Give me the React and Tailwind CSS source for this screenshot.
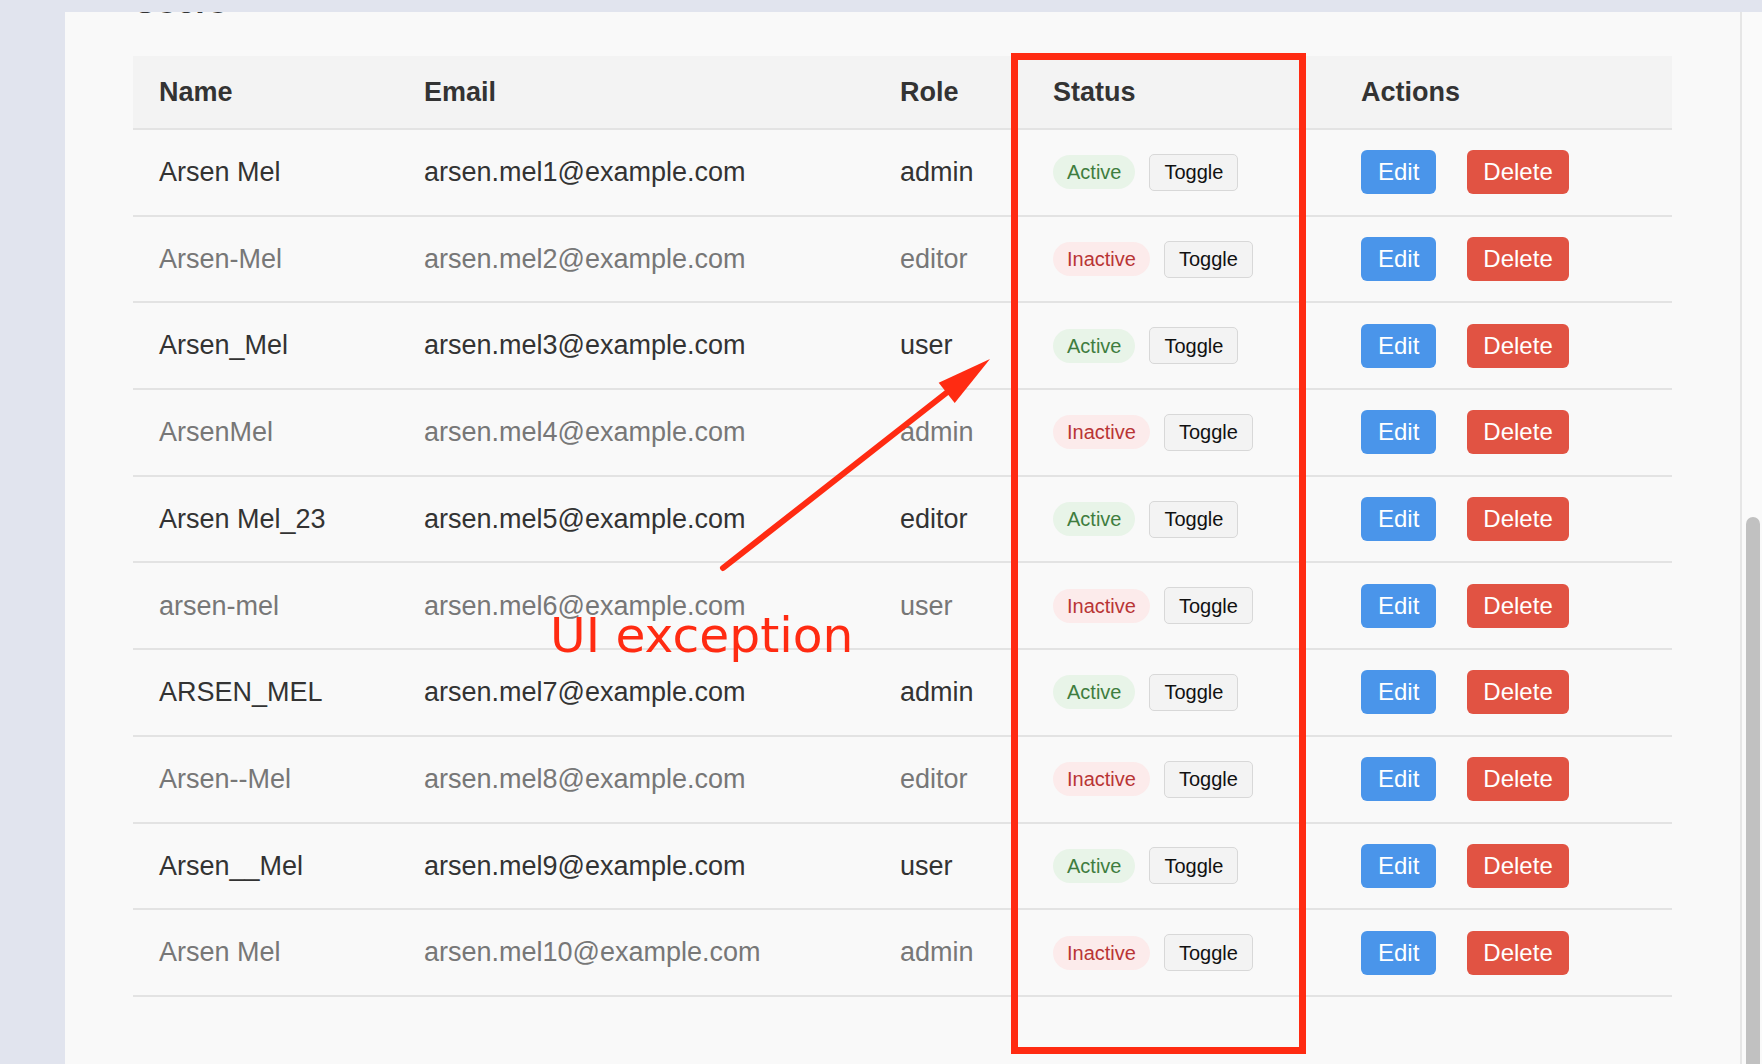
import React from 'react'

const users = [
  { name: 'Arsen Mel', email: 'arsen.mel1@example.com', role: 'admin', active: true },
  { name: 'Arsen-Mel', email: 'arsen.mel2@example.com', role: 'editor', active: false },
  { name: 'Arsen_Mel', email: 'arsen.mel3@example.com', role: 'user', active: true },
  { name: 'ArsenMel', email: 'arsen.mel4@example.com', role: 'admin', active: false },
  { name: 'Arsen Mel_23', email: 'arsen.mel5@example.com', role: 'editor', active: true },
  { name: 'arsen-mel', email: 'arsen.mel6@example.com', role: 'user', active: false },
  { name: 'ARSEN_MEL', email: 'arsen.mel7@example.com', role: 'admin', active: true },
  { name: 'Arsen--Mel', email: 'arsen.mel8@example.com', role: 'editor', active: false },
  { name: 'Arsen__Mel', email: 'arsen.mel9@example.com', role: 'user', active: true },
  { name: 'Arsen Mel', email: 'arsen.mel10@example.com', role: 'admin', active: false },
]

const cols = 'grid grid-cols-[265px_476px_153px_308px_336px]'

const StatusBadge = ({ active }) =>
  active ? (
    <span className="inline-flex h-[34px] items-center rounded-full bg-[#e8f4e8] px-[14px] text-[20px] text-[#3f7d3f]">
      Active
    </span>
  ) : (
    <span className="inline-flex h-[34px] items-center rounded-full bg-[#fcebeb] px-[14px] text-[20px] text-[#b93535]">
      Inactive
    </span>
  )

const UserRow = ({ user }) => {
  const tone = user.active ? 'text-[#333333]' : 'text-[#777777]'

  return (
    <div className={`${cols} h-[86.7px] border-b-2 border-[#e3e3e3] text-[27px] ${tone}`}>
      <div className="flex items-center px-[26px] whitespace-nowrap">{user.name}</div>
      <div className="flex items-center px-[26px] whitespace-nowrap">{user.email}</div>
      <div className="flex items-center px-[26px] whitespace-nowrap">{user.role}</div>
      <div className="flex items-center gap-[14px] px-[26px]">
        <StatusBadge active={user.active} />
        <button
          type="button"
          className="h-[37px] rounded-[5px] border border-[#d8d8d8] bg-[#f3f3f3] px-[14px] text-[20px] text-[#111111]"
        >
          Toggle
        </button>
      </div>
      <div className="flex items-center gap-[31px] px-[26px]">
        <button type="button" className="h-[44px] rounded-[6px] bg-[#4a95ea] px-[17px] text-[24px] text-white">
          Edit
        </button>
        <button type="button" className="h-[44px] rounded-[6px] bg-[#e15343] px-[16px] text-[24px] text-white">
          Delete
        </button>
      </div>
    </div>
  )
}

const App = () => {
  return (
    <div className="relative h-[1064px] w-full overflow-hidden bg-[#e1e4ee] font-['Liberation_Sans',Arial,sans-serif]">
      <div className="flex h-full flex-col pt-[12px]">
        <div className="flex min-h-0 flex-1">
          <div className="w-[65px] shrink-0" />

          <main className="min-w-0 flex-1 overflow-hidden bg-[#f9f9f9] px-[68px]">
            <div className="-mt-[28px]">
              <h2 className="text-[34px] font-bold leading-[34px] text-[#333333]">Users</h2>

              <div className="mt-[38px]">
                <div className={`${cols} h-[74px] border-b-2 border-[#e3e3e3] bg-[#f3f3f3] text-[27px] font-bold text-[#333333]`}>
                  <div className="flex items-center px-[26px]">Name</div>
                  <div className="flex items-center px-[26px]">Email</div>
                  <div className="flex items-center px-[26px]">Role</div>
                  <div className="flex items-center px-[26px]">Status</div>
                  <div className="flex items-center px-[26px]">Actions</div>
                </div>

                {users.map((user, index) => (
                  <UserRow key={index} user={user} />
                ))}
              </div>
            </div>
          </main>

          {/* scrollbar track */}
          <div className="flex w-[22px] shrink-0 flex-col border-l-2 border-[#e6e6e6] bg-[#fafafa] pt-[505px] pl-[4px] pr-[2px]">
            <div className="flex-1 rounded-t-full bg-[#c1c1c1]" />
          </div>
        </div>
      </div>

      {/* annotation overlay */}
      <div className="absolute left-[1011px] top-[53px] h-[1001px] w-[295px] border-[7px] border-[#ff2b12]" />

      <svg className="absolute left-0 top-0" width="1762" height="1064" viewBox="0 0 1762 1064">
        <line x1="723" y1="568" x2="950" y2="390" stroke="#ff2b12" strokeWidth="6" strokeLinecap="round" />
        <polygon points="990,359 954.7,403.1 938.7,382.7" fill="#ff2b12" />
      </svg>

      <div className="absolute left-[550px] top-[611px] font-['DejaVu_Sans',sans-serif] text-[48.7px] leading-[48px] text-[#ff2b12] whitespace-nowrap">
        UI exception
      </div>
    </div>
  )
}

export default App
